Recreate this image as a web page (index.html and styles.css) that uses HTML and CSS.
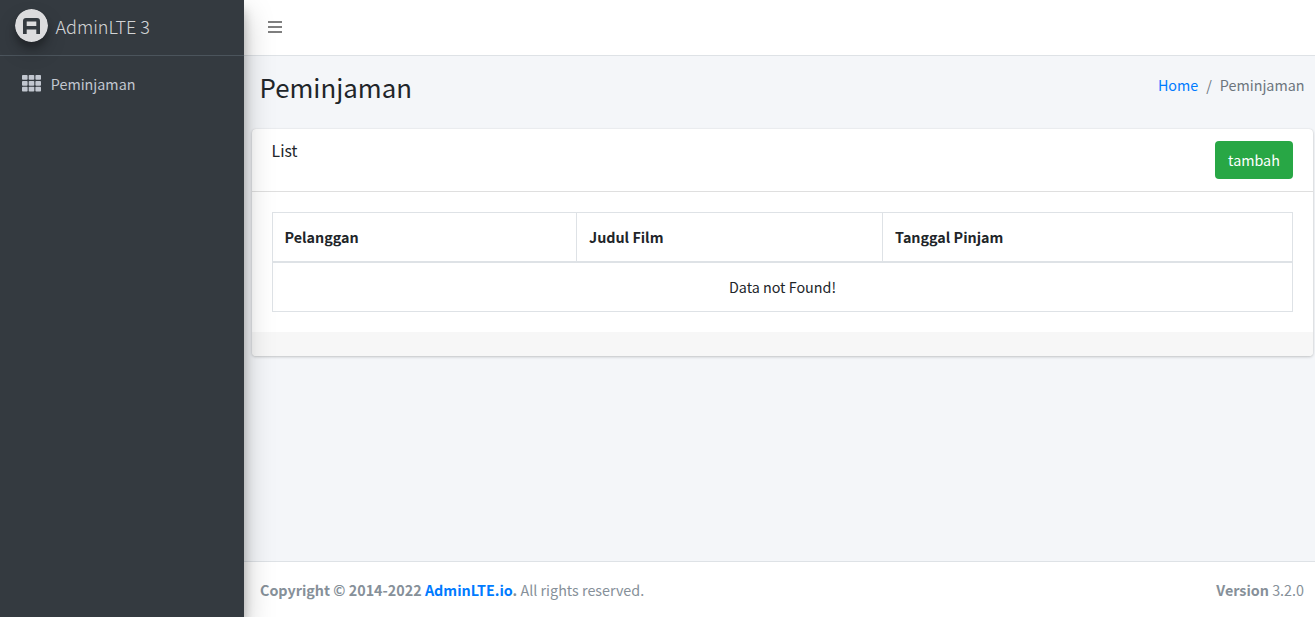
FILE: index.html
```html
<!DOCTYPE html>
<html lang="id">
<head>
<meta charset="utf-8">
<title>Peminjaman</title>
<link rel="stylesheet" href="styles.css">
</head>
<body>
<div class="wrapper">
  <aside class="sidebar">
    <a class="brand" href="#">
      <svg class="brand-logo" viewBox="0 0 33 33">
        <circle cx="16.5" cy="16.5" r="16.5" fill="#dcdcde"/>
        <path fill="#343a40" fill-rule="evenodd" d="M8 25V12Q8 9 11 9H22Q25 9 25 12V25H21.3V20.5H11.7V25ZM11.7 12.5V17H21.3V12.5Z"/>
      </svg>
      <span class="brand-text">AdminLTE 3</span>
    </a>
    <nav class="menu">
      <a class="menu-link" href="#">
        <svg class="menu-icon" viewBox="0 0 19 17" fill="currentColor">
          <rect x="0" y="0" width="5.6" height="4.8" rx=".8"/><rect x="6.7" y="0" width="5.6" height="4.8" rx=".8"/><rect x="13.4" y="0" width="5.6" height="4.8" rx=".8"/>
          <rect x="0" y="5.9" width="5.6" height="4.8" rx=".8"/><rect x="6.7" y="5.9" width="5.6" height="4.8" rx=".8"/><rect x="13.4" y="5.9" width="5.6" height="4.8" rx=".8"/>
          <rect x="0" y="11.8" width="5.6" height="4.8" rx=".8"/><rect x="6.7" y="11.8" width="5.6" height="4.8" rx=".8"/><rect x="13.4" y="11.8" width="5.6" height="4.8" rx=".8"/>
        </svg>
        <span>Peminjaman</span>
      </a>
    </nav>
  </aside>
  <div class="main">
    <header class="navbar">
      <svg class="bars" viewBox="0 0 14 12" fill="#7f7f7f"><rect width="14" height="2"/><rect y="5" width="14" height="2"/><rect y="10" width="14" height="2"/></svg>
    </header>
    <main class="content">
      <div class="content-header">
        <h1 class="title">Peminjaman</h1>
        <nav class="breadcrumb"><a href="#">Home</a><span class="slash">/</span><span>Peminjaman</span></nav>
      </div>
      <section class="card">
        <div class="card-header">
          <h3 class="card-title">List</h3>
          <a class="btn" href="#">tambah</a>
        </div>
        <div class="card-body">
          <table class="table">
            <colgroup><col class="col-a"><col class="col-b"><col></colgroup>
            <thead><tr><th>Pelanggan</th><th>Judul Film</th><th>Tanggal Pinjam</th></tr></thead>
            <tbody><tr><td colspan="3">Data not Found!</td></tr></tbody>
          </table>
        </div>
        <div class="card-footer"></div>
      </section>
    </main>
    <footer class="footer">
      <div><strong>Copyright © 2014-2022 <a href="#">AdminLTE.io</a>.</strong> All rights reserved.</div>
      <div><strong>Version</strong> 3.2.0</div>
    </footer>
  </div>
</div>
</body>
</html>
```
FILE: styles.css
```css
* { box-sizing: border-box; }
body {
  margin: 0;
  font-family: "Noto Sans CJK SC", "Noto Sans", sans-serif;
  font-size: 14.33px;
  line-height: 24px;
  color: #212529;
  overflow: hidden;
}
a { color: #007bff; text-decoration: none; }
.wrapper { display: flex; height: 617px; }
.sidebar {
  width: 244px;
  flex: none;
  background: #343a40;
  box-shadow: 0 14px 28px rgba(0,0,0,.25), 0 10px 10px rgba(0,0,0,.22);
  z-index: 2;
}
.brand {
  display: flex;
  height: 56px;
  padding: 9px 0 0 15px;
  border-bottom: 1px solid #4b545c;
  color: rgba(255,255,255,.8);
}
.brand-logo {
  width: 33px;
  height: 33px;
  border-radius: 50%;
  box-shadow: 0 10px 20px rgba(0,0,0,.19), 0 6px 6px rgba(0,0,0,.23);
}
.brand-text {
  margin: 3px 0 0 7.5px;
  font-size: 18px;
  font-weight: 300;
  line-height: 28px;
}
.menu { padding: 16px 0 0 22.4px; }
.menu-link { display: flex; color: #c2c7d0; }
.menu-icon { width: 19px; height: 17px; margin: 3px 9.4px 0 0; }
.main { flex: 1; display: flex; flex-direction: column; }
.navbar {
  height: 56px;
  padding: 21px 24px;
  background: #fff;
  border-bottom: 1px solid #dee2e6;
}
.bars { display: block; width: 14px; height: 12px; }
.content { flex: 1; background: #f4f6f9; padding: 0 2px 0 8px; }
.content-header {
  display: flex;
  justify-content: space-between;
  height: 73px;
  padding: 13px 8.5px 0 7.5px;
}
.title { margin: 0; font-size: 25.8px; font-weight: 400; line-height: 36px; }
.breadcrumb { display: flex; padding-top: 4px; color: #6c757d; }
.slash { padding: 0 8px; }
.card {
  background: #fff;
  border-radius: 4px;
  box-shadow: 0 0 1px rgba(0,0,0,.125), 0 1px 3px rgba(0,0,0,.2);
  overflow: hidden;
}
.card-header {
  display: flex;
  justify-content: space-between;
  height: 63px;
  padding: 12px 20px 12px 19.6px;
  border-bottom: 1px solid #dfdfdf;
}
.card-title { margin: 0; font-size: 15.76px; font-weight: 400; line-height: 20px; }
.btn {
  width: 78px;
  height: 38px;
  border-radius: 4px;
  background: #28a745;
  color: #fff;
  line-height: 38px;
  text-align: center;
}
.card-body { padding: 20px; }
.table {
  width: 100%;
  table-layout: fixed;
  border-collapse: collapse;
  border: 1px solid #dee2e6;
}
.col-a { width: 304px; }
.col-b { width: 306px; }
.table th {
  height: 49px;
  padding: 0 12px;
  border: 1px solid #dee2e6;
  border-bottom-width: 2px;
  text-align: left;
  font-weight: 700;
}
.table th:first-child { padding-left: 11.5px; }
.table td { height: 50px; padding: 0 12px; text-align: center; }
.card-footer { height: 24px; background: #f7f7f7; }
.footer {
  display: flex;
  justify-content: space-between;
  height: 56px;
  padding: 16px 11px 0 16px;
  background: #fff;
  border-top: 1px solid #dee2e6;
  color: #869099;
}
```
